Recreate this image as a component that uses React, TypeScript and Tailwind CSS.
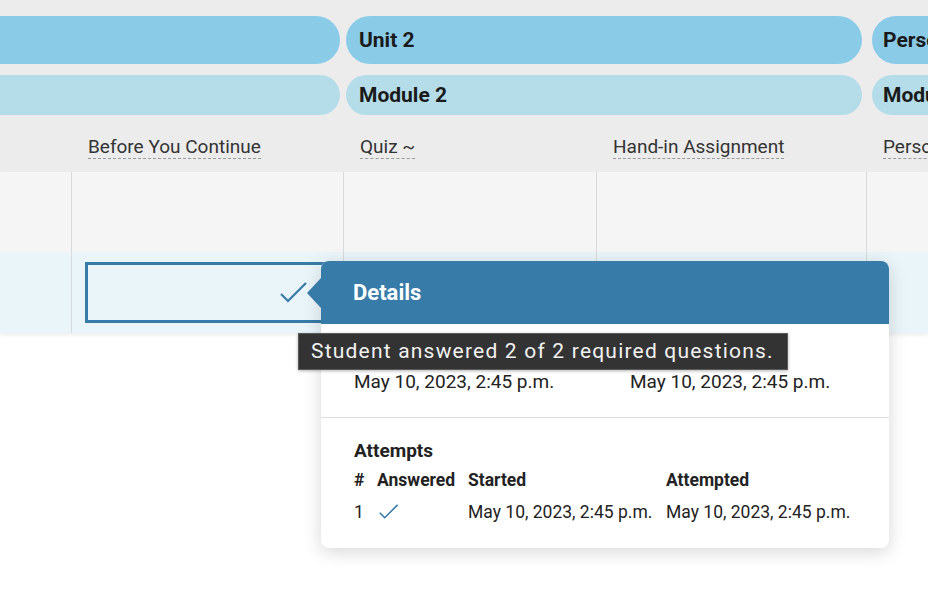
const cols = [
  { w: "w-[71px]", label: "" },
  { w: "w-[272px]", label: "Before You Continue" },
  { w: "w-[253px]", label: "Quiz ~" },
  { w: "w-[270px]", label: "Hand-in Assignment" },
  { w: "w-[62px]", label: "Personal" },
];

function Check({ className }: { className?: string }) {
  return (
    <svg viewBox="0 0 28 22" className={className} fill="none">
      <polyline
        points="1,12 8,19 26,1"
        stroke="#377ba8"
        strokeWidth="2.2"
        strokeLinecap="butt"
        strokeLinejoin="miter"
      />
    </svg>
  );
}

export default function App() {
  return (
    <div className="relative w-[928px] h-[600px] overflow-hidden bg-white font-['Roboto',sans-serif] text-[#222]">
      {/* header */}
      <div className="bg-[#ececec] pt-4">
        <div className="flex h-12">
          <div className="w-[340px] shrink-0 rounded-r-full bg-[#8acbe8]" />
          <div className="ml-[6px] w-[516px] shrink-0 rounded-full bg-[#8acbe8] pl-[13px] pt-[2px] flex items-center text-[21px] font-bold text-[#1a1a1a]">
            Unit 2
          </div>
          <div className="ml-[10px] w-[100px] shrink-0 rounded-full bg-[#8acbe8] pl-[11px] pt-[2px] flex items-center text-[21px] font-bold text-[#1a1a1a] whitespace-nowrap">
            Personal
          </div>
        </div>
        <div className="flex h-10 mt-[11px]">
          <div className="w-[340px] shrink-0 rounded-r-full bg-[#b5dde9]" />
          <div className="ml-[6px] w-[516px] shrink-0 rounded-full bg-[#b5dde9] pl-[13px] pt-[2px] flex items-center text-[21px] font-bold text-[#1a1a1a]">
            Module 2
          </div>
          <div className="ml-[10px] w-[100px] shrink-0 rounded-full bg-[#b5dde9] pl-[11px] pt-[2px] flex items-center text-[21px] font-bold text-[#1a1a1a] whitespace-nowrap">
            Module 3
          </div>
        </div>
        <div className="flex h-[57px]">
          {cols.map((c, i) => (
            <div key={i} className={`${c.w} shrink-0 pl-[17px] pt-[21px] overflow-hidden whitespace-nowrap`}>
              {c.label && (
                <span className="text-[19px] leading-[22px] text-[#333] border-b border-dashed border-[#999]">
                  {c.label}
                </span>
              )}
            </div>
          ))}
        </div>
      </div>

      {/* rows */}
      <div className="shadow-[0_2px_4px_rgba(0,0,0,0.08)]">
        <div className="flex h-[80px] bg-[#f5f5f5]">
          {cols.map((c, i) => (
            <div key={i} className={`${c.w} shrink-0 ${i > 0 ? "border-l border-[#dadada]" : ""}`} />
          ))}
        </div>
        <div className="flex h-[81px] bg-[#eaf5fa]">
          {cols.map((c, i) => (
            <div key={i} className={`${c.w} shrink-0 ${i > 0 ? "border-l border-[#dadada]" : ""}`}>
              {i === 1 && (
                <div className="pt-[10px] pl-[13px] pr-[12px]">
                  <div className="h-[61px] border-[3px] border-[#377ba8] flex items-center justify-end pr-[20px]">
                    <Check className="w-[28px] h-[22px]" />
                  </div>
                </div>
              )}
            </div>
          ))}
        </div>
      </div>

      {/* details popover */}
      <div className="absolute left-[321px] top-[261px] w-[568px] h-[287px] rounded-lg bg-white shadow-[0_4px_18px_rgba(0,0,0,0.16)]">
        <div className="absolute left-[-14px] top-[17px] w-0 h-0 border-y-[15px] border-y-transparent border-r-[14px] border-r-[#377ba8]" />
        <div className="h-[63px] rounded-t-lg bg-[#377ba8] pl-8 flex items-center text-[22px] font-bold text-white">
          Details
        </div>
        <div className="h-[94px] border-b border-[#dddddd] pl-[33px] pt-[14px] grid grid-cols-[276px_1fr] content-start text-[19px] leading-[24px] text-[#222]">
          <div className="font-bold">Started</div>
          <div className="font-bold">Completed</div>
          <div className="mt-[8px] whitespace-nowrap">May 10, 2023, 2:45 p.m.</div>
          <div className="mt-[8px] whitespace-nowrap">May 10, 2023, 2:45 p.m.</div>
        </div>
        <div className="pl-[33px] pt-[21px] text-[17.5px] leading-[22px]">
          <div className="font-bold text-[19px] leading-[24px]">Attempts</div>
          <div className="grid grid-cols-[23px_91px_198px_1fr] mt-[6px]">
            <div className="font-bold">#</div>
            <div className="font-bold">Answered</div>
            <div className="font-bold">Started</div>
            <div className="font-bold">Attempted</div>
            <div className="mt-[10px]">1</div>
            <div className="mt-[10px] flex items-center">
              <Check className="w-[20px] h-[16px] ml-[2px]" />
            </div>
            <div className="mt-[10px] whitespace-nowrap">May 10, 2023, 2:45 p.m.</div>
            <div className="mt-[10px] whitespace-nowrap">May 10, 2023, 2:45 p.m.</div>
          </div>
        </div>
      </div>

      {/* tooltip */}
      <div className="absolute left-[298px] top-[333px] w-[490px] h-[37px] pl-[12px] flex items-center bg-[#333333] border border-[#5a5a5a] text-[21px] tracking-[1.2px] text-[#f2f2f2] whitespace-nowrap shadow-[0_1px_3px_rgba(0,0,0,0.3)]">
        Student answered 2 of 2 required questions.
      </div>
    </div>
  );
}
